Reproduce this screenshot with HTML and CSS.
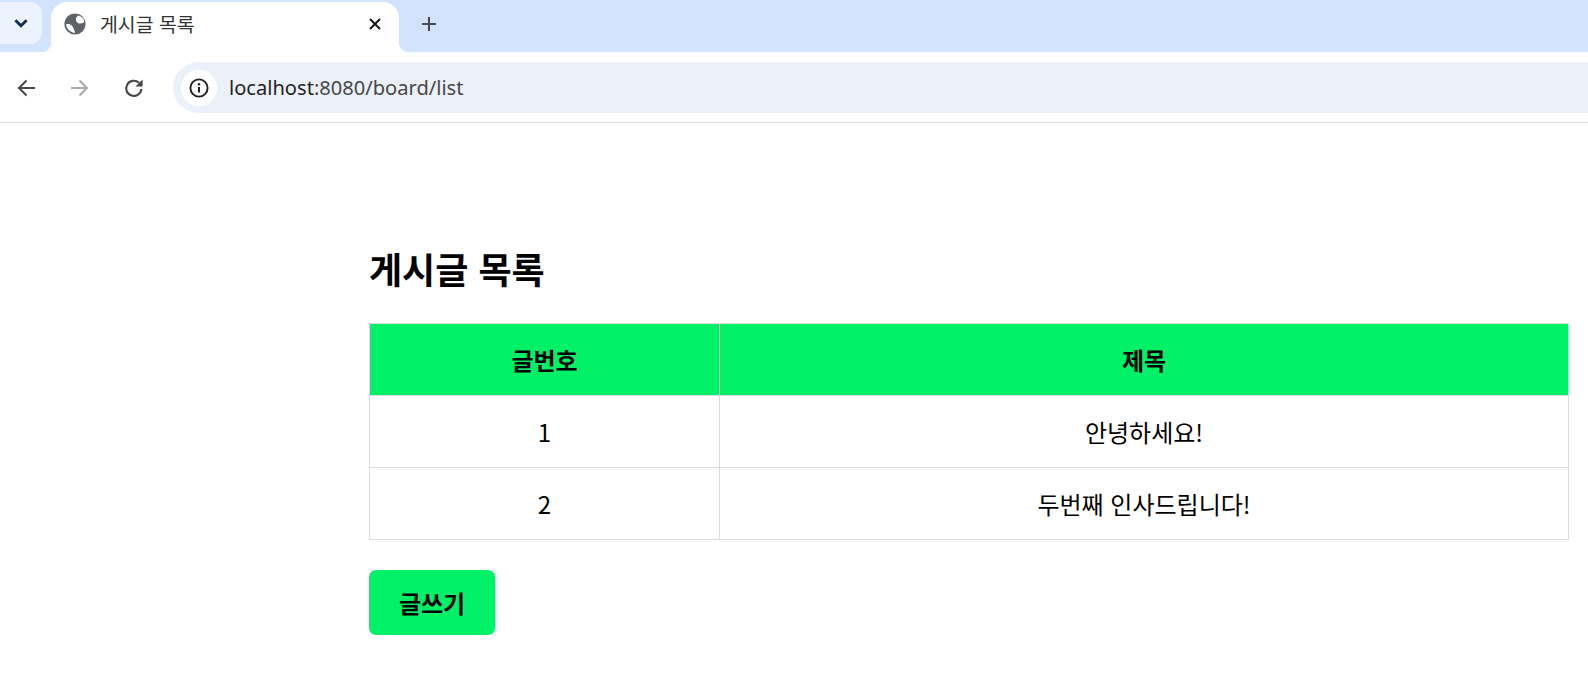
FILE: index.html
```html
<!DOCTYPE html>
<html lang="ko">
<head>
<meta charset="utf-8">
<title>게시글 목록</title>
<link rel="stylesheet" href="styles.css">
</head>
<body>
<header class="chrome">
  <div class="tabstrip">
    <div class="tabsearch">
      <svg width="16" height="16" viewBox="0 0 16 16"><path d="M2.4 5.2 8 10.8 13.6 5.2" fill="none" stroke="#0b2a55" stroke-width="2.8"/></svg>
    </div>
    <div class="tab">
      <svg class="favicon" width="22" height="22" viewBox="0 0 22 22"><circle cx="11" cy="11" r="10.6" fill="#5f6368"/><path d="M14 2.5C12.5 4 11.5 5.5 12 7.5C12.6 9.8 15 11 17 10.5C18.3 10.2 19.3 9.8 20 9.2L20 7C18.5 3.5 16 3 14 2.5ZM2 11.5C3.5 10.8 5.5 11 7 12C9 13.3 9.5 15 10 16.5C10.4 17.8 11 18.5 11.2 19.8C7 20 2.5 16 2 11.5Z" fill="#fff"/></svg>
      <span class="tab-title">게시글 목록</span>
      <svg class="tab-close" width="14" height="14" viewBox="0 0 14 14"><path d="M2 2 12 12M12 2 2 12" stroke="#1a1a1a" stroke-width="2.1"/></svg>
    </div>
    <svg class="newtab" width="16" height="16" viewBox="0 0 16 16"><path d="M8 1V15M1 8H15" stroke="#474b50" stroke-width="2.1"/></svg>
  </div>
  <div class="toolbar">
    <div class="navgroup">
      <svg width="20" height="20" viewBox="0 0 20 20"><path d="M19 10H3M10.5 2.5 3 10 10.5 17.5" fill="none" stroke="#474747" stroke-width="2"/></svg>
      <svg width="20" height="20" viewBox="0 0 20 20"><path d="M1 10H17M9.5 2.5 17 10 9.5 17.5" fill="none" stroke="#a8a8a8" stroke-width="2"/></svg>
      <svg width="20" height="20" viewBox="0 0 20 20"><path d="M17.4 11A7.6 7.6 0 1 1 15 4.8" fill="none" stroke="#474747" stroke-width="2.1"/><path d="M18.6 1.4V8.6H11.4Z" fill="#474747"/></svg>
    </div>
    <div class="omnibox">
      <div class="siteinfo">
        <svg width="20" height="20" viewBox="0 0 20 20"><circle cx="10" cy="10" r="8.6" fill="none" stroke="#1f1f1f" stroke-width="1.9"/><path d="M10 9V14.6" stroke="#1f1f1f" stroke-width="2"/><circle cx="10" cy="6.2" r="1.2" fill="#1f1f1f"/></svg>
      </div>
      <span class="url"><span class="host">localhost</span>:8080/board/list</span>
    </div>
  </div>
</header>
<main class="page">
  <h1 class="title">게시글 목록</h1>
  <table class="board">
    <thead>
      <tr><th class="col-no">글번호</th><th>제목</th></tr>
    </thead>
    <tbody>
      <tr><td>1</td><td>안녕하세요!</td></tr>
      <tr><td>2</td><td>두번째 인사드립니다!</td></tr>
    </tbody>
  </table>
  <a class="write" href="#">글쓰기</a>
</main>
</body>
</html>
```
FILE: styles.css
```css
* { box-sizing: border-box; }
html, body { margin: 0; height: 100%; overflow: hidden; background: #fff; }
body { font-family: "Noto Sans CJK KR", "Noto Sans", sans-serif; color: #000; }
svg { display: block; flex: none; }

.chrome { height: 123px; border-bottom: 1px solid #e0e0e0; }
.tabstrip { height: 52px; background: #d3e3fd; display: flex; align-items: flex-start; padding-top: 2px; }
.tabsearch { width: 42px; height: 42px; background: #ecf2fe; border-radius: 0 12px 12px 0; display: flex; align-items: center; justify-content: center; }
.tab { width: 348px; height: 50px; margin-left: 9px; background: #fff; border-radius: 16px 16px 0 0; display: flex; align-items: center; padding: 0 17px 7px 13px; position: relative; }
.tab::before, .tab::after { content: ""; position: absolute; bottom: 0; width: 10px; height: 10px; }
.tab::before { left: -10px; background: radial-gradient(circle at 0 0, transparent 10px, #fff 10.5px); }
.tab::after { right: -10px; background: radial-gradient(circle at 100% 0, transparent 10px, #fff 10.5px); }
.tab-title { margin-left: 14px; font-size: 19.4px; color: #333; flex: 1; line-height: 24px; }
.newtab { margin: 14px 0 0 22px; }

.toolbar { height: 70px; display: flex; align-items: center; padding-left: 16px; }
.navgroup { display: flex; gap: 34px; margin: 2px 29px 0 0; }
.omnibox { flex: 1; height: 51px; margin-top: 1px; background: #ecf0f9; border-radius: 26px 0 0 26px; display: flex; align-items: center; padding-left: 8px; }
.siteinfo { width: 36px; height: 36px; background: #fff; border-radius: 50%; display: flex; align-items: center; justify-content: center; }
.url { margin-left: 12px; font-family: "Noto Sans", sans-serif; font-size: 20.1px; color: #474747; }
.host { color: #1f1f1f; }

.page { width: 1569px; padding-left: 369px; }
.title { margin: 0; padding-top: 115px; font-size: 36px; line-height: 60px; font-weight: 700; height: 200px; }
.board { width: 100%; border-collapse: collapse; table-layout: fixed; font-size: 24px; }
.board th, .board td { border: 1px solid #ddd; height: 72px; text-align: center; padding: 0; font-weight: 400; }
.board th { background: #00f067; font-weight: 700; }
.col-no { width: 350px; }
.write { display: flex; align-items: center; justify-content: center; width: 126px; height: 65px; margin-top: 30px; background: #00f067; border-radius: 7px; color: #000; font-weight: 700; font-size: 24px; text-decoration: none; }
```
